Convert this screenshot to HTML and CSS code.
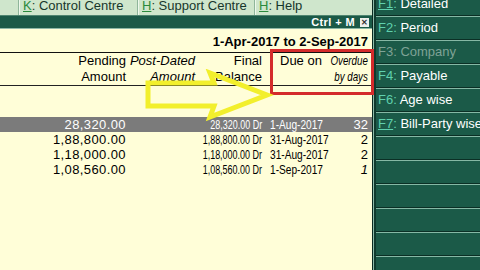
FILE: index.html
```html
<!DOCTYPE html>
<html>
<head>
    <title>Bills Payable</title>
    <link rel="stylesheet" href="styles.css">
</head>
<body>
<div class="screen">
    <div class="main">
        <div class="tabs">
            <div class="tab first"></div>
            <div class="tab w1"><u>K</u>: Control Centre</div>
            <div class="tab w2"><u>H</u>: Support Centre</div>
            <div class="tab w3"><u>H</u>: Help</div>
        </div>
        <div class="strip">
            <span class="hotkey">Ctrl + M</span>
            <span class="close">&#x2715;</span>
        </div>
        <div class="report">
            <div class="period">1-Apr-2017 to 2-Sep-2017</div>
            <div class="cols head">
                <div class="num first-col">Pending<br>Amount</div>
                <div class="num it">Post-Dated<br>Amount</div>
                <div class="num bal">Final<br>Balance</div>
                <div class="due">Due on</div>
                <div class="num it narrow"><span>Overdue<br>by days</span></div>
            </div>
            <div class="rows">
                <div class="cols row sel">
                    <div class="num amt">28,320.00</div>
                    <div></div>
                    <div class="num narrow bal"><span>28,320.00 Dr</span></div>
                    <div class="date narrow"><span>1-Aug-2017</span></div>
                    <div class="num days">32</div>
                </div>
                <div class="cols row">
                    <div class="num amt">1,88,800.00</div>
                    <div></div>
                    <div class="num narrow bal"><span>1,88,800.00 Dr</span></div>
                    <div class="date narrow"><span>31-Aug-2017</span></div>
                    <div class="num days">2</div>
                </div>
                <div class="cols row">
                    <div class="num amt">1,18,000.00</div>
                    <div></div>
                    <div class="num narrow bal"><span>1,18,000.00 Dr</span></div>
                    <div class="date narrow"><span>31-Aug-2017</span></div>
                    <div class="num days">2</div>
                </div>
                <div class="cols row">
                    <div class="num amt">1,08,560.00</div>
                    <div></div>
                    <div class="num narrow bal"><span>1,08,560.00 Dr</span></div>
                    <div class="date narrow"><span>1-Sep-2017</span></div>
                    <div class="num days it">1</div>
                </div>
            </div>

            <!-- annotations drawn over the report -->
            <div class="mark"></div>
            <svg class="arrow" width="140" height="60" viewBox="0 0 140 60">
                <path d="M4 14 H70 L66 4 L123 26 L66 48 L70 37 H4 Z" fill="none" stroke="#f2ef2c" stroke-width="5" stroke-linejoin="miter"/>
            </svg>
        </div>
    </div>

    <div class="side">
        <div class="fbtn"><span class="key"><u>F1</u>:</span> Detailed</div>
        <div class="fbtn"><span class="key">F2:</span> Period</div>
        <div class="fbtn off"><span class="key">F3:</span> Company</div>
        <div class="fbtn"><span class="key">F4:</span> Payable</div>
        <div class="fbtn"><span class="key">F6:</span> Age wise</div>
        <div class="fbtn"><span class="key"><u>F7</u>:</span> Bill-Party wise</div>
        <div class="fbtn"></div>
        <div class="fbtn"></div>
        <div class="fbtn"></div>
        <div class="fbtn"></div>
        <div class="fbtn"></div>
        <div class="fbtn"></div>
    </div>
</div>
</body>
</html>
```

FILE: styles.css
```css
body { margin: 0; font-family: "Liberation Sans", Arial, sans-serif; background: #fffed8; }
.screen { display: flex; width: 480px; height: 270px; overflow: hidden; }

.main { width: 372px; display: flex; flex-direction: column; }
.tabs { display: flex; height: 15px; background: #cfe6cc; border-bottom: 1px solid #4f8570; }
.tab { box-sizing: border-box; border-left: 1px solid #8fb59a; box-shadow: inset 1px 0 #eef8ec; padding-left: 4px; font-size: 13px; line-height: 9px; padding-top: 1px; color: #17362b; white-space: nowrap; overflow: hidden; }
.tab u { color: #2b8a3c; text-decoration-color: #2b8a3c; }
.first { width: 18px; border-left: none; box-shadow: none; }
.w1 { width: 119px; }
.w2 { width: 117px; }
.w3 { width: 118px; }

.strip { height: 12px; background: #1b5a47; border-bottom: 1px solid #8db8a6; display: flex; justify-content: flex-end; align-items: center; gap: 5px; padding-right: 3px; }
.hotkey { color: #fff; font-weight: bold; font-size: 11px; letter-spacing: 0.4px; line-height: 12px; }
.close { width: 9px; height: 9px; background: #eef0ec; color: #333; font-size: 8px; line-height: 9px; text-align: center; font-weight: bold; }

.report { position: relative; flex: 1; background: #fffed8; }
.period { height: 24px; box-sizing: border-box; padding: 5px 4px 0 0; text-align: right; font-weight: bold; font-size: 13px; line-height: 15px; border-bottom: 1px solid #111; }

.cols { display: grid; grid-template-columns: 128px 68px 68px 62px 44px; white-space: nowrap; }
.num { text-align: right; padding-right: 1px; }
.it { font-style: italic; }
.narrow { display: flex; justify-content: flex-end; }
.narrow span { display: block; transform: scaleX(0.75); transform-origin: right center; }
.date.narrow { justify-content: flex-start; }
.date.narrow span { transform: scaleX(0.78); transform-origin: left center; }
.bal { padding-right: 2px; }

.head { font-size: 13px; line-height: 16px; border-bottom: 1px solid #222; }
.head .first-col { padding-right: 2px; }
.head .due { padding-left: 16px; }
.head .narrow { padding-right: 2px; }

.rows { margin-top: 31px; }
.row { height: 15px; font-size: 13px; line-height: 15px; color: #000; }
.row .amt { letter-spacing: 0.4px; padding-right: 2px; }
.row .bal span { transform: scaleX(0.69); }
.row .date { padding-left: 6px; }
.row .days { padding-right: 2px; }
.sel { background: #7b7b7b; color: #fff; }

.mark { position: absolute; left: 270px; top: 20px; width: 98px; height: 40px; border: 3px solid #d42b2b; }
.arrow { position: absolute; left: 144px; top: 40px; }

.side { width: 108px; background: #0f3a2e; border-left: 1px solid #0a2a21; box-shadow: inset 1px 0 #8dbba9; padding-left: 3px; margin-top: -8px; }
.fbtn { height: 22px; background: #1b5a48; border-top: 1px solid #86b8a5; border-bottom: 1px solid #0b2f25; color: #fff; font-size: 13px; line-height: 22px; padding-left: 2px; white-space: nowrap; }
.key { color: #5fd1ad; }
.key u { text-decoration-color: #5fd1ad; }
.off { color: #7fa396; }
.off .key { color: #7fa396; }
```
